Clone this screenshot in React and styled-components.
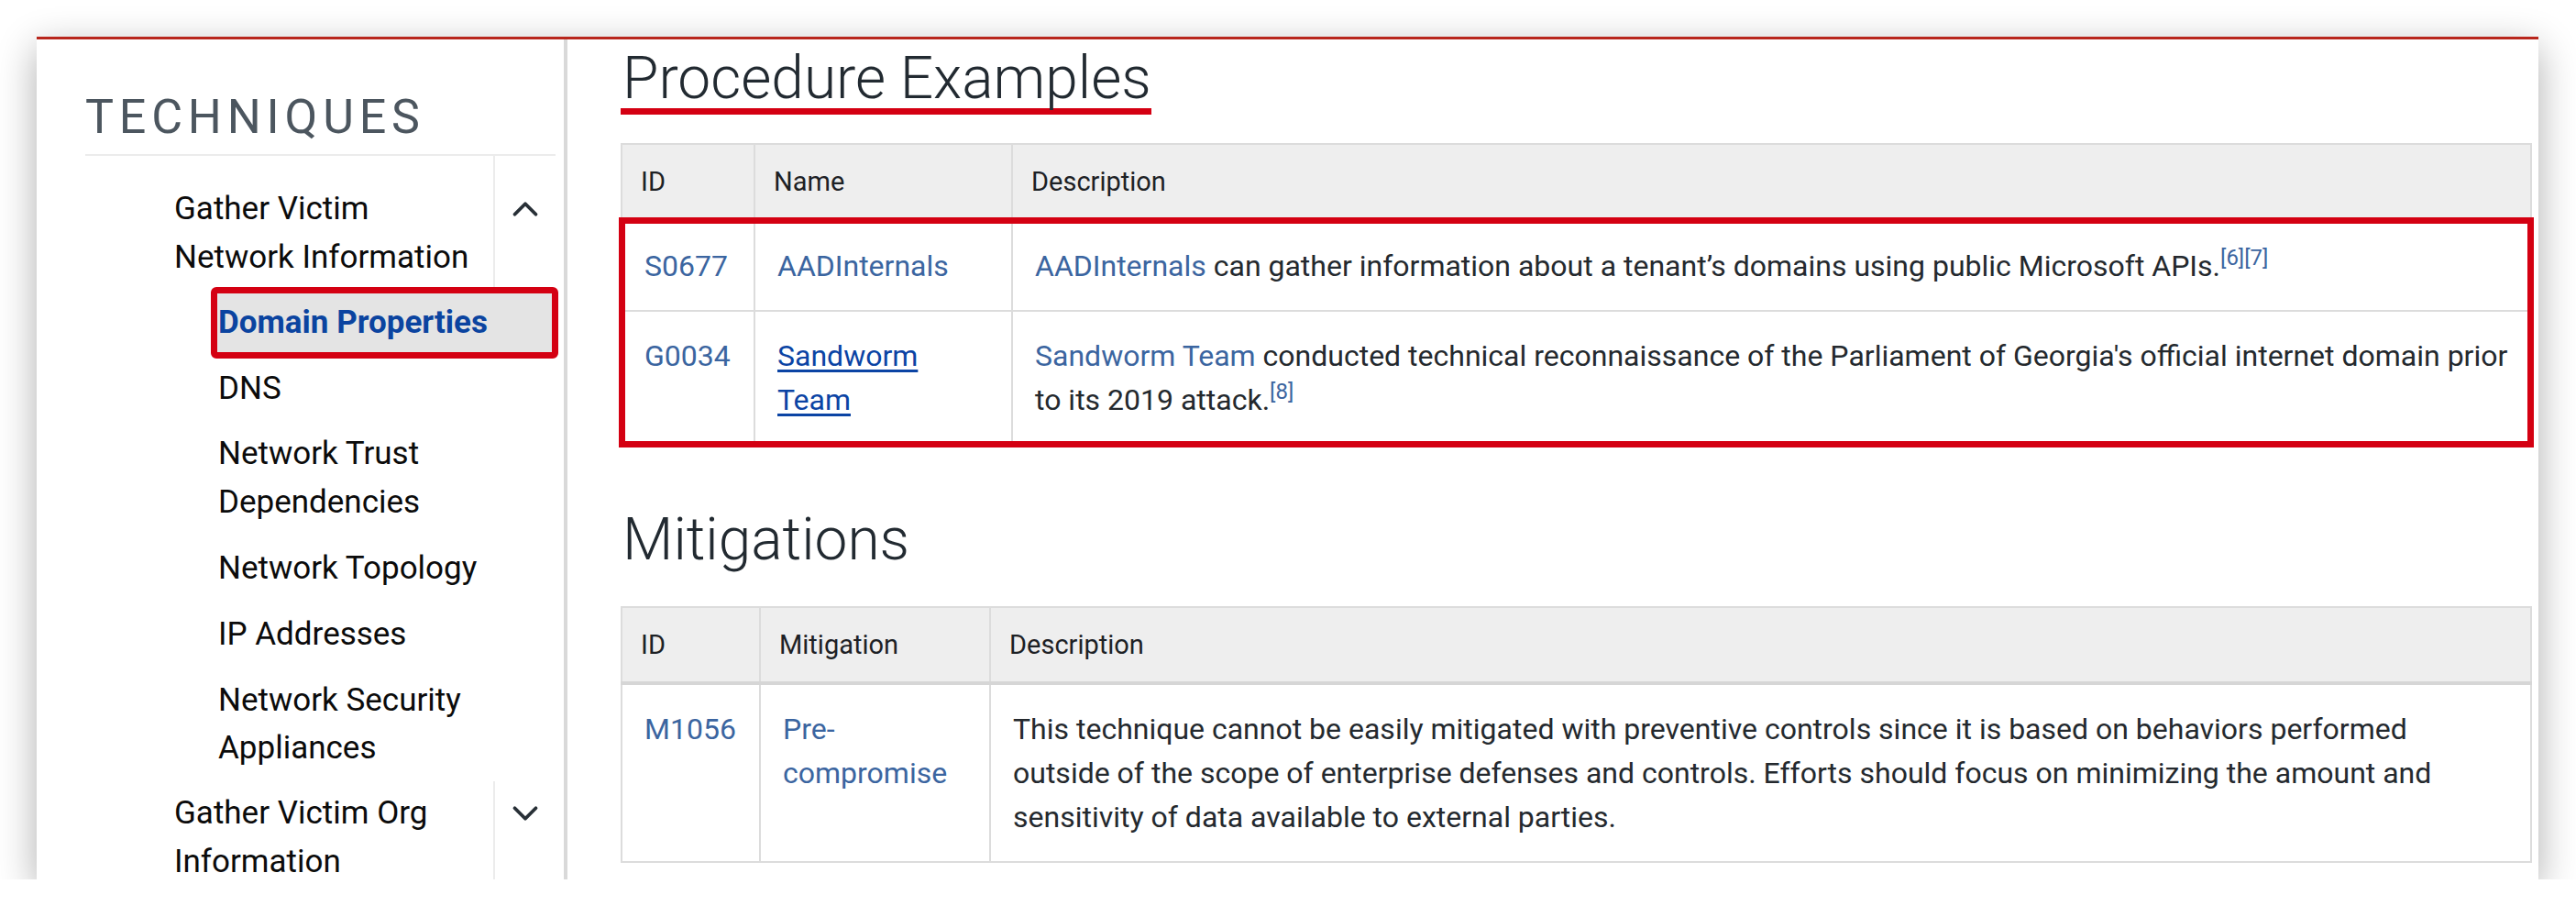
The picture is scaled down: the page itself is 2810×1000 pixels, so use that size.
import React from "react";
import styled, { createGlobalStyle } from "styled-components";
import { ChevronUp, ChevronDown } from "lucide-react";

const GlobalStyle = createGlobalStyle`
  html, body {
    margin: 0;
    padding: 0;
    background: #ffffff;
  }
  body {
    font-family: Roboto, "Liberation Sans", Arial, sans-serif;
    color: #24292e;
  }
`;

const LINK = "#3b65a0";
const NAME_LINK = "#0b44a4";
const MARK = "#d40012";

const nav = [
  {
    label: ["Gather Victim", "Network Information"],
    open: true,
    children: [
      { label: ["Domain Properties"], active: true },
      { label: ["DNS"] },
      { label: ["Network Trust", "Dependencies"] },
      { label: ["Network Topology"] },
      { label: ["IP Addresses"] },
      { label: ["Network Security", "Appliances"] }
    ]
  },
  { label: ["Gather Victim Org", "Information"], open: false, children: [] }
];

const Lines = ({ lines }) =>
  lines.map((l, j) => (
    <span key={j}>
      {l}
      {j < lines.length - 1 && <br />}
    </span>
  ));

export default function App() {
  return (
    <>
      <GlobalStyle />
      <Card>
        <Sidebar>
          <SideTitle>TECHNIQUES</SideTitle>
          <NavList>
            {nav.map((p, i) => (
              <React.Fragment key={i}>
                <ParentRow>
                  <ParentLabel $first={i === 0}>
                    <Lines lines={p.label} />
                  </ParentLabel>
                  <Toggle $first={i === 0}>
                    {p.open ? (
                      <ChevronUp size={46} strokeWidth={2} color="#283037" />
                    ) : (
                      <ChevronDown size={46} strokeWidth={2} color="#283037" />
                    )}
                  </Toggle>
                </ParentRow>
                {p.children.map((c, k) => (
                  <ChildItem key={k} $active={c.active}>
                    <Lines lines={c.label} />
                  </ChildItem>
                ))}
              </React.Fragment>
            ))}
          </NavList>
        </Sidebar>

        <Main>
          <Heading $marked>Procedure Examples</Heading>
          <Table>
            <colgroup>
              <col style={{ width: 145 }} />
              <col style={{ width: 281 }} />
              <col />
            </colgroup>
            <thead>
              <tr>
                <Th>ID</Th>
                <Th>Name</Th>
                <Th>Description</Th>
              </tr>
            </thead>
            <MarkedBody>
              <tr>
                <Td>
                  <Link>S0677</Link>
                </Td>
                <Td>
                  <Link>AADInternals</Link>
                </Td>
                <Td>
                  <Link>AADInternals</Link> can gather information about a tenant’s domains using
                  public Microsoft APIs.
                  <Ref>[6]</Ref>
                  <Ref>[7]</Ref>
                </Td>
              </tr>
              <tr>
                <Td>
                  <Link>G0034</Link>
                </Td>
                <Td>
                  <NameLink>Sandworm Team</NameLink>
                </Td>
                <Td>
                  <Link>Sandworm Team</Link> conducted technical reconnaissance of the Parliament of
                  Georgia's official internet domain prior to its 2019 attack.
                  <Ref>[8]</Ref>
                </Td>
              </tr>
            </MarkedBody>
          </Table>

          <Heading>Mitigations</Heading>
          <Table>
            <colgroup>
              <col style={{ width: 151 }} />
              <col style={{ width: 251 }} />
              <col />
            </colgroup>
            <thead>
              <tr>
                <Th>ID</Th>
                <Th>Mitigation</Th>
                <Th>Description</Th>
              </tr>
            </thead>
            <tbody>
              <tr>
                <Td>
                  <Link>M1056</Link>
                </Td>
                <Td>
                  <Link>Pre-compromise</Link>
                </Td>
                <Td>
                  This technique cannot be easily mitigated with preventive controls since it is based
                  on behaviors performed outside of the scope of enterprise defenses and controls.
                  Efforts should focus on minimizing the amount and sensitivity of data available to
                  external parties.
                </Td>
              </tr>
            </tbody>
          </Table>
        </Main>
      </Card>
    </>
  );
}

const Card = styled.div`
  margin: 40px 0 0 40px;
  width: 2729px;
  height: 919px;
  box-sizing: border-box;
  border-top: 3px solid #b8261c;
  background: #ffffff;
  box-shadow: 0 12px 40px rgba(0, 0, 0, 0.32);
  display: flex;
  overflow: hidden;
`;

const Sidebar = styled.aside`
  width: 579px;
  flex-shrink: 0;
  box-sizing: border-box;
  padding: 0 9px 0 53px;
  border-right: 4px solid #d9d9d9;
`;

const SideTitle = styled.h2`
  margin: 0;
  padding: 54px 0 9px;
  font-size: 52px;
  line-height: 62px;
  font-weight: 400;
  letter-spacing: 5.8px;
  color: #4c565f;
  border-bottom: 2px solid #ececec;
`;

const NavList = styled.ul`
  list-style: none;
  margin: 0;
  padding: 0;
  font-size: 35px;
  line-height: 52.5px;
  color: #0b0b0b;
`;

const ParentRow = styled.li`
  display: flex;
`;

const ParentLabel = styled.div`
  flex: 1;
  padding: ${p => (p.$first ? "32px 0 9px 97px" : "9px 0 10px 97px")};
`;

const Toggle = styled.div`
  width: 66px;
  flex-shrink: 0;
  border-left: 2px solid #ececec;
  display: flex;
  justify-content: center;
  align-items: flex-start;
  padding-top: ${p => (p.$first ? "35px" : "12px")};
`;

const ChildItem = styled.li`
  margin-left: 140px;
  padding: 9.7px 0 9.7px 5px;
  border-radius: 3px;
  ${p =>
    p.$active &&
    `
    background: #e4e4e4;
    color: #0b44a0;
    font-weight: 700;
    outline: 7px solid ${MARK};
    outline-offset: -4px;
  `}
`;

const Main = styled.main`
  flex: 1;
  box-sizing: border-box;
  padding: 10px 7px 0 58px;
`;

const Heading = styled.h2`
  display: inline-block;
  margin: ${p => (p.$marked ? "0 0 31px" : "70px 0 40px")};
  font-size: 64px;
  line-height: 65px;
  font-weight: 300;
  color: #222a31;
  border-bottom: ${p => (p.$marked ? `7px solid ${MARK}` : "none")};
  padding-left: 2px;
`;

const Table = styled.table`
  width: 100%;
  table-layout: fixed;
  border-collapse: collapse;
  border: 2px solid #dcdcdc;
  font-size: 32px;
  line-height: 48px;
`;

const Th = styled.th`
  background: #eeeeee;
  text-align: left;
  font-weight: 400;
  font-size: 29px;
  line-height: 40px;
  color: #1d2125;
  padding: 20px 20px;
  border: 2px solid #dcdcdc;
  border-bottom: 4px solid #d6d6d6;
`;

const Td = styled.td`
  vertical-align: top;
  padding: 24px;
  border: 2px solid #dcdcdc;
  color: #24292e;
`;

const MarkedBody = styled.tbody`
  outline: 7px solid ${MARK};
  outline-offset: -4px;
`;

const Link = styled.span`
  color: ${LINK};
`;

const NameLink = styled.span`
  color: ${NAME_LINK};
  text-decoration: underline;
  text-underline-offset: 4px;
  text-decoration-thickness: 3px;
`;

const Ref = styled.sup`
  color: ${LINK};
  font-size: 24px;
  line-height: 0;
`;
